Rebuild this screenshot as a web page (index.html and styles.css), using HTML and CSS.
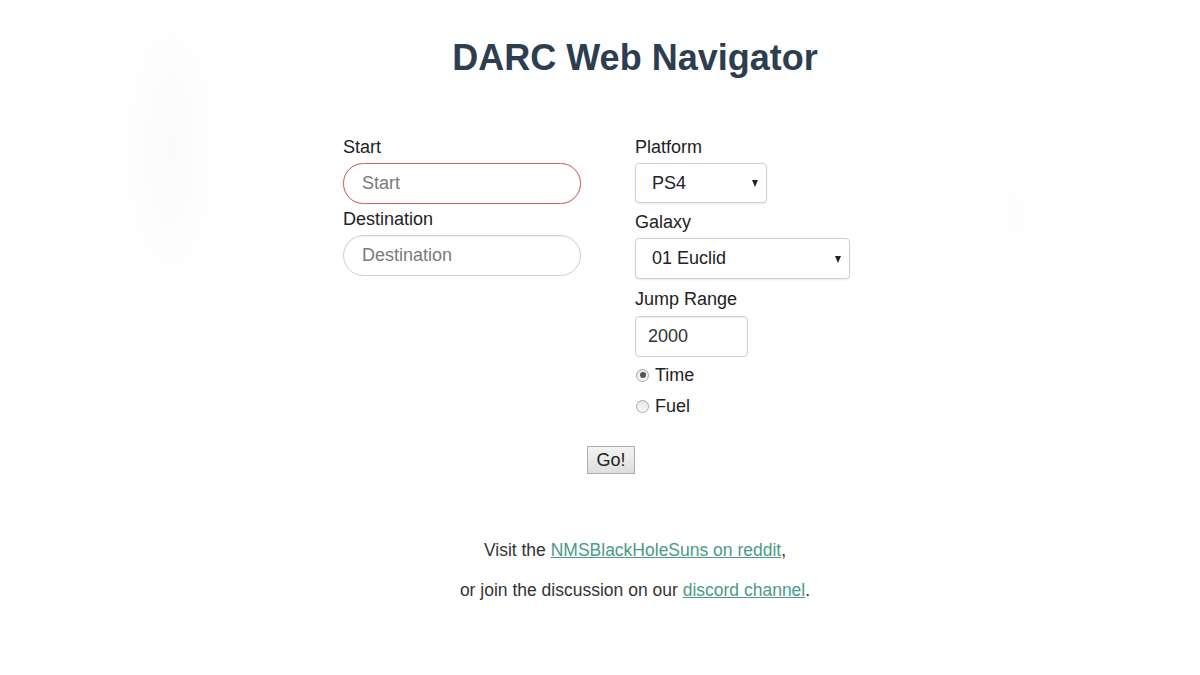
FILE: index.html
```html
<!DOCTYPE html>
<html lang="en">
<head>
<meta charset="utf-8">
<title>DARC Web Navigator</title>
<link rel="stylesheet" href="styles.css">
</head>
<body>
<div class="app">
  <h1 class="title">DARC Web Navigator</h1>
  <form class="form">
    <div class="col">
      <label class="lbl" for="start">Start</label>
      <input class="txt round focus" id="start" type="text" placeholder="Start">
      <label class="lbl" for="dest">Destination</label>
      <input class="txt round" id="dest" type="text" placeholder="Destination">
    </div>
    <div class="col">
      <label class="lbl">Platform</label>
      <div class="sel sel-platform"><span class="sel-val">PS4</span></div>
      <label class="lbl">Galaxy</label>
      <div class="sel sel-galaxy"><span class="sel-val">01 Euclid</span></div>
      <label class="lbl lbl-range" for="range">Jump Range</label>
      <input class="txt box" id="range" type="text" value="2000">
      <div class="radios">
        <label class="radio"><span class="dot on"></span>Time</label>
        <label class="radio"><span class="dot"></span>Fuel</label>
      </div>
    </div>
  </form>
  <div class="go-row"><button class="go" type="button">Go!</button></div>
  <div class="footer">
    <p>Visit the <a href="#">NMSBlackHoleSuns on reddit</a>,</p>
    <p>or join the discussion on our <a href="#">discord channel</a>.</p>
  </div>
</div>
</body>
</html>
```
FILE: styles.css
```css
html, body {
  margin: 0;
  padding: 0;
}
html {
  min-height: 100%;
  background-color: #ffffff;
  background-image:
    radial-gradient(ellipse 55px 160px at 170px 150px, rgba(0,0,0,0.018), rgba(0,0,0,0) 100%),
    radial-gradient(ellipse 25px 75px at 1015px 215px, rgba(0,0,0,0.008), rgba(0,0,0,0) 100%);
  background-repeat: no-repeat;
  background-size: 1200px 675px;
}
body {
  font-family: "Liberation Sans", Arial, sans-serif;
  color: #222;
  padding-left: 70px;
}
.app {
  text-align: center;
}
.title {
  margin: 37px 0 0;
  font-size: 36px;
  line-height: 42px;
  font-weight: bold;
  color: #2c3e50;
}
.form {
  width: 584px;
  margin: 57px auto 0;
  display: grid;
  grid-template-columns: 1fr 1fr;
  text-align: left;
}
.col {
  display: flex;
  flex-direction: column;
  align-items: flex-start;
}
.lbl {
  font-size: 18px;
  line-height: 22px;
  color: #222;
  margin-bottom: 5px;
}
.lbl-range {
  margin-top: 1px;
  margin-bottom: 6px;
}
.txt {
  font-family: "Liberation Sans", Arial, sans-serif;
  font-size: 18px;
  color: #333;
  box-sizing: border-box;
  height: 41px;
  border: 1px solid #cfcfcf;
  background: #fff;
  outline: none;
  box-shadow: inset 0 1px 2px rgba(0,0,0,0.06);
}
.txt::placeholder {
  color: #7a7a7a;
}
.round {
  width: 238px;
  border-radius: 21px;
  padding: 0 18px;
  margin-bottom: 4px;
}
.round.focus {
  border-color: #c26a6a;
  box-shadow: 0 0 1px rgba(190,80,80,0.5);
}
.box {
  width: 113px;
  border-radius: 4px;
  padding: 0 12px;
}
.sel {
  position: relative;
  box-sizing: border-box;
  height: 40px;
  border: 1px solid #cfcfcf;
  border-radius: 4px;
  background: #fff;
  box-shadow: 0 1px 2px rgba(0,0,0,0.08);
  display: flex;
  align-items: center;
  padding-left: 16px;
  font-size: 18px;
  color: #222;
  margin-bottom: 8px;
}
.sel::after {
  content: "";
  position: absolute;
  right: 8px;
  top: 50%;
  margin-top: -3px;
  border-left: 3.5px solid transparent;
  border-right: 3.5px solid transparent;
  border-top: 7px solid #222;
}
.sel-platform { width: 132px; }
.sel-galaxy { width: 215px; height: 41px; }
.radios {
  display: flex;
  flex-direction: column;
  gap: 7px;
  margin-top: 6px;
}
.radio {
  display: flex;
  align-items: center;
  font-size: 18px;
  line-height: 24px;
  color: #222;
}
.dot {
  box-sizing: border-box;
  width: 13px;
  height: 13px;
  border-radius: 50%;
  border: 1px solid #a8a8a8;
  background: linear-gradient(#e6e6e6, #fafafa);
  margin: 0 6px 0 1px;
  position: relative;
}
.dot.on::after {
  content: "";
  position: absolute;
  left: 2.5px;
  top: 2.5px;
  width: 6px;
  height: 6px;
  border-radius: 50%;
  background: #555;
}
.go-row {
  margin-top: 28px;
  padding-right: 48px;
}
.go {
  font-family: "Liberation Sans", Arial, sans-serif;
  font-size: 18px;
  color: #222;
  width: 48px;
  height: 28px;
  padding: 0;
  border: 1px solid #adadad;
  border-radius: 0;
  background: linear-gradient(#f4f4f4, #dedede);
}
.footer {
  margin-top: 65px;
  font-size: 17.5px;
  line-height: 22px;
  color: #333;
}
.footer p {
  margin: 0 0 18px;
}
.footer a {
  color: #4a9a88;
  text-decoration: underline;
}
```
